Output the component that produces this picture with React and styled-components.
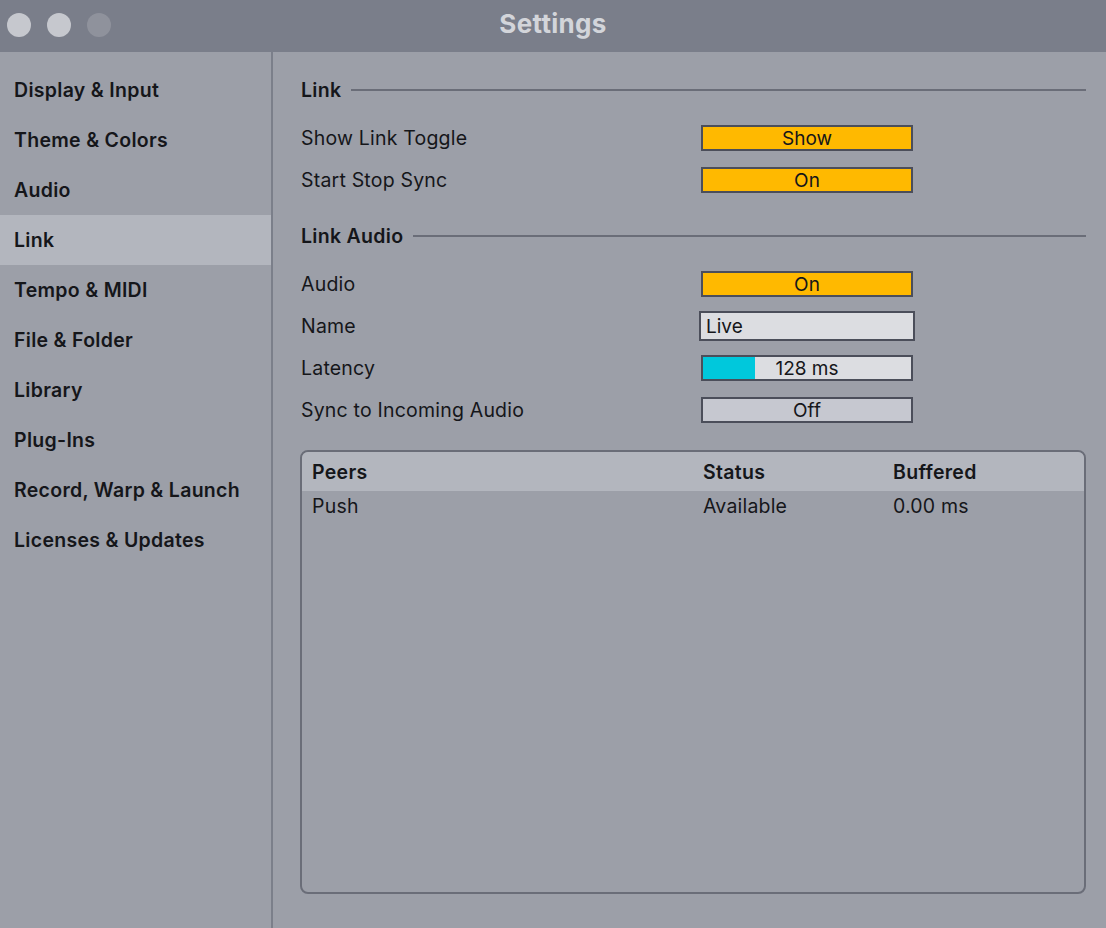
import React from 'react'
import styled, { createGlobalStyle } from 'styled-components'

const Global = createGlobalStyle`
  html, body { margin: 0; padding: 0; }
  body {
    font-family: Inter, "Noto Sans", sans-serif;
    background: #9c9fa8;
    color: #15161a;
  }
`

const sections = [
  'Display & Input',
  'Theme & Colors',
  'Audio',
  'Link',
  'Tempo & MIDI',
  'File & Folder',
  'Library',
  'Plug-Ins',
  'Record, Warp & Launch',
  'Licenses & Updates',
]

export default function App() {
  return (
    <Window>
      <Global />
      <TitleBar>
        <Lights>
          <Light />
          <Light />
          <Light $dim />
        </Lights>
        <Title>Settings</Title>
      </TitleBar>
      <Body>
        <Sidebar>
          {sections.map(s => (
            <NavItem key={s} $active={s === 'Link'}>{s}</NavItem>
          ))}
        </Sidebar>
        <Content>
          <SectionHead>Link</SectionHead>
          <Row>
            <Label>Show Link Toggle</Label>
            <Toggle $on>Show</Toggle>
          </Row>
          <Row>
            <Label>Start Stop Sync</Label>
            <Toggle $on>On</Toggle>
          </Row>

          <SectionHead $gap>Link Audio</SectionHead>
          <Row>
            <Label>Audio</Label>
            <Toggle $on>On</Toggle>
          </Row>
          <Row>
            <Label>Name</Label>
            <TextField>Live</TextField>
          </Row>
          <Row>
            <Label>Latency</Label>
            <Slider>
              <SliderFill style={{ width: '25%' }} />
              <SliderText>128 ms</SliderText>
            </Slider>
          </Row>
          <Row>
            <Label>Sync to Incoming Audio</Label>
            <Toggle>Off</Toggle>
          </Row>

          <Table>
            <HeadRow>
              <Cell>Peers</Cell>
              <Cell>Status</Cell>
              <Cell>Buffered</Cell>
            </HeadRow>
            <DataRow>
              <Cell>Push</Cell>
              <Cell>Available</Cell>
              <Cell>0.00 ms</Cell>
            </DataRow>
          </Table>
        </Content>
      </Body>
    </Window>
  )
}

const Window = styled.div`
  width: 1106px;
  height: 928px;
  display: flex;
  flex-direction: column;
  background: #9c9fa8;
  overflow: hidden;
`

const TitleBar = styled.div`
  height: 52px;
  flex: none;
  background: #7a7e8a;
  position: relative;
  display: flex;
  align-items: center;
  justify-content: center;
`

const Lights = styled.div`
  position: absolute;
  left: 7px;
  top: 13px;
  display: flex;
  gap: 16px;
`

const Light = styled.span`
  width: 24px;
  height: 24px;
  border-radius: 50%;
  background: ${p => (p.$dim ? '#8f929c' : '#c6c8ce')};
`

const Title = styled.div`
  font-size: 26px;
  font-weight: 700;
  letter-spacing: 0.3px;
  color: #d3d5da;
  margin-top: -5px;
`

const Body = styled.div`
  flex: 1;
  display: flex;
`

const Sidebar = styled.div`
  width: 271px;
  flex: none;
  padding-top: 13px;
  border-right: 2px solid #7b7f8a;
`

const NavItem = styled.div`
  height: 50px;
  display: flex;
  align-items: center;
  padding-left: 14px;
  font-size: 19.5px;
  font-weight: 600;
  letter-spacing: 0.3px;
  background: ${p => (p.$active ? '#b3b6be' : 'transparent')};
`

const Content = styled.div`
  flex: 1;
  padding: 25px 20px 0 28px;
`

const SectionHead = styled.div`
  display: flex;
  align-items: center;
  height: 26px;
  font-size: 19.5px;
  font-weight: 600;
  letter-spacing: 0.3px;
  margin-top: ${p => (p.$gap ? '22px' : '0')};
  margin-bottom: 14px;

  &::after {
    content: '';
    flex: 1;
    height: 2px;
    background: #6a6d78;
    margin-left: 10px;
  }
`

const Row = styled.div`
  display: flex;
  align-items: center;
  height: 42px;
`

const Label = styled.div`
  width: 400px;
  font-size: 19.5px;
  letter-spacing: 0.2px;
`

const Control = styled.div`
  width: 212px;
  height: 26px;
  box-sizing: border-box;
  border: 2px solid #4b4e5a;
  display: flex;
  align-items: center;
  font-size: 19px;
  line-height: 1;
`

const Toggle = styled(Control)`
  justify-content: center;
  background: ${p => (p.$on ? '#ffb900' : '#c6c8d0')};
`

const TextField = styled(Control)`
  width: 216px;
  height: 30px;
  margin-left: -2px;
  padding-left: 5px;
  background: #dcdde1;
`

const Slider = styled(Control)`
  position: relative;
  justify-content: center;
  background: #dcdde1;
`

const SliderFill = styled.div`
  position: absolute;
  left: 0;
  top: 0;
  bottom: 0;
  background: #00c8dc;
`

const SliderText = styled.span`
  position: relative;
`

const Table = styled.div`
  margin-top: 19px;
  margin-left: -1px;
  height: 444px;
  box-sizing: border-box;
  border: 2px solid #6a6d78;
  border-radius: 8px;
  overflow: hidden;
`

const TableRow = styled.div`
  display: grid;
  grid-template-columns: 391px 190px 1fr;
  align-items: center;
  padding-left: 10px;
  font-size: 19.5px;
  letter-spacing: 0.2px;
`

const HeadRow = styled(TableRow)`
  height: 39px;
  background: #b3b6be;
  font-weight: 600;
  letter-spacing: 0.3px;
`

const DataRow = styled(TableRow)`
  height: 30px;
`

const Cell = styled.div``
